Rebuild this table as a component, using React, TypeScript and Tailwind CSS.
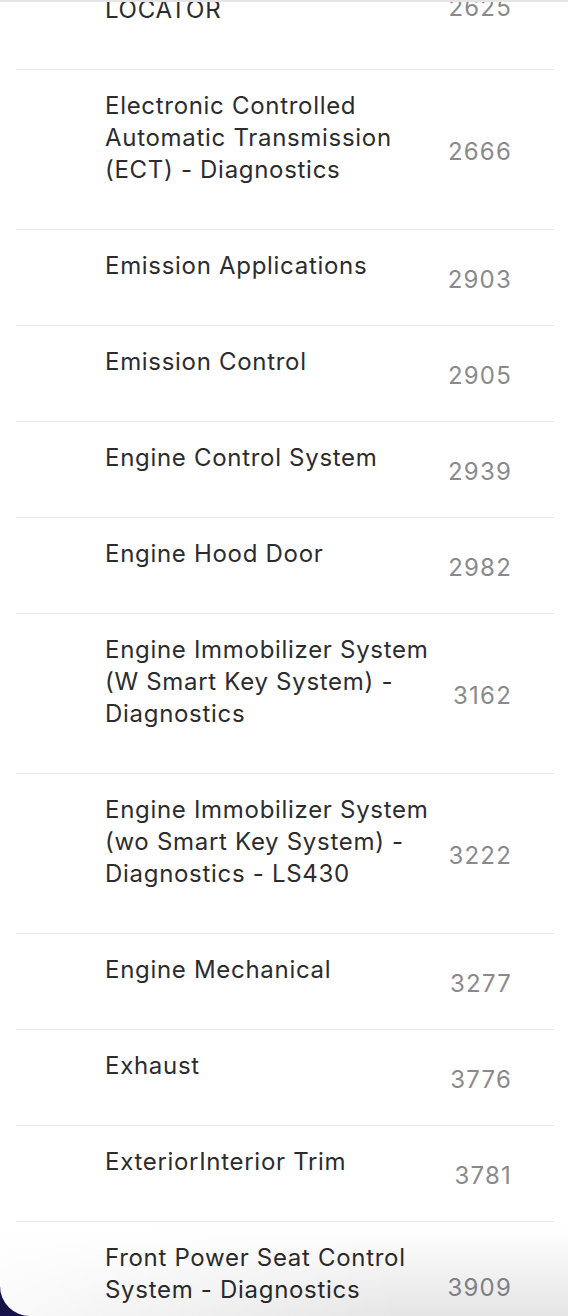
import React from 'react';

interface Entry {
  lines: string[];
  page: number;
}

const entries: Entry[] = [
  { lines: ['Electrical Wire Routing', 'LOCATOR'], page: 2625 },
  { lines: ['Electronic Controlled', 'Automatic Transmission', '(ECT) - Diagnostics'], page: 2666 },
  { lines: ['Emission Applications'], page: 2903 },
  { lines: ['Emission Control'], page: 2905 },
  { lines: ['Engine Control System'], page: 2939 },
  { lines: ['Engine Hood Door'], page: 2982 },
  { lines: ['Engine Immobilizer System', '(W Smart Key System) -', 'Diagnostics'], page: 3162 },
  { lines: ['Engine Immobilizer System', '(wo Smart Key System) -', 'Diagnostics - LS430'], page: 3222 },
  { lines: ['Engine Mechanical'], page: 3277 },
  { lines: ['Exhaust'], page: 3776 },
  { lines: ['ExteriorInterior Trim'], page: 3781 },
  { lines: ['Front Power Seat Control', 'System - Diagnostics'], page: 3909 },
  { lines: ['Front Wiper and Washer'], page: 3950 },
];

const Row: React.FC<{ entry: Entry; last?: boolean }> = ({ entry, last }) => (
  <div className={`flex items-center ml-4 mr-[14px] ${last ? '' : 'border-b border-[#e6e6e6]'}`}>
    <div className="flex-1 pl-[89px] pt-5 pb-[43px] text-[24px] leading-8 tracking-[0.7px] text-[#2c2c2e]">
      {entry.lines.map((l) => (
        <div key={l} className="whitespace-nowrap">{l}</div>
      ))}
    </div>
    <div className="w-[110px] pr-[42px] pt-1 text-right text-[24px] leading-8 tracking-[1.2px] text-[#8a8a8e]">
      {entry.page}
    </div>
  </div>
);

export default function App() {
  return (
    <div className="h-[1316px] w-[568px] bg-[#16124a] font-['Inter','Liberation_Sans',sans-serif]">
      <div className="relative h-full w-full overflow-hidden rounded-bl-[30px] bg-white">
        <div className="-mt-[58px]">
          {entries.map((e, i) => (
            <Row key={i} entry={e} last={i === entries.length - 1} />
          ))}
        </div>
        <div className="absolute top-0 left-0 h-[2px] w-full bg-[#e4e4e4]" />
        <div className="absolute bottom-0 left-0 h-[90px] w-full bg-[linear-gradient(to_bottom,rgba(0,0,0,0),rgba(0,0,0,0.1))] [mask-image:linear-gradient(to_right,rgba(0,0,0,0.2),black_70%)]" />
      </div>
    </div>
  );
}
